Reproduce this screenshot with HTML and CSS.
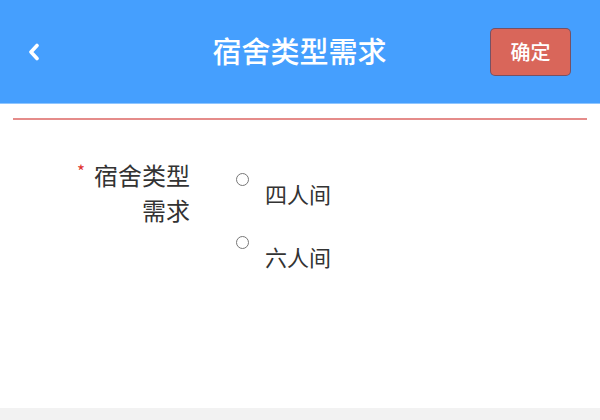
FILE: index.html
```html
<!DOCTYPE html>
<html>
<head>
  <meta charset="UTF-8">
  <meta name="viewport" content="width=device-width, initial-scale=1.0">
  <title>宿舍类型需求</title>
  <link rel="stylesheet" href="styles.css">
</head>
<body>
  <div class="page">
    <div class="topbar">
      <a class="back" href="#" aria-label="返回">
        <svg width="12" height="18" viewBox="0 0 12 18">
          <polyline points="9,2.5 3,9 9,15.5" fill="none" stroke="#fff" stroke-width="3.6" stroke-linecap="round" stroke-linejoin="round"/>
        </svg>
      </a>
      <h1 class="title">宿舍类型需求</h1>
      <button class="ok-btn">确定</button>
    </div>
    <div class="divider"></div>
    <form class="form">
      <div class="form-row">
        <label class="form-label"><span class="req">*</span>宿舍类型需求</label>
        <div class="options">
          <label class="option">
            <input type="radio" name="room" value="4">
            <span>四人间</span>
          </label>
          <label class="option">
            <input type="radio" name="room" value="6">
            <span>六人间</span>
          </label>
        </div>
      </div>
    </form>
  </div>
  <div class="footer"></div>
</body>
</html>
```

FILE: styles.css
```css
body {
  margin: 0;
  background: #f2f2f2;
  font-family: "Noto Sans CJK SC", "Noto Sans", sans-serif;
  color: #333;
}

.page {
  background: #fff;
  min-height: 408px;
}

.topbar {
  display: grid;
  grid-template-columns: 1fr auto 1fr;
  align-items: center;
  height: 103px;
  padding: 0 29px 0 28px;
  background: #459ffe;
  border-bottom: 1px solid #8fc6ff;
}

.back {
  display: flex;
  width: 12px;
  height: 18px;
}

.title {
  margin: 0;
  font-size: 29px;
  font-weight: 500;
  color: #fff;
  line-height: 1;
  padding: 0 0 2px 0;
}

.ok-btn {
  justify-self: end;
  width: 81px;
  height: 48px;
  background: #d9665a;
  border: 1px solid rgba(20, 60, 110, 0.5);
  border-radius: 5px;
  color: #fff;
  font-family: inherit;
  font-size: 20px;
  font-weight: 500;
  padding: 0;
  cursor: pointer;
}

.divider {
  height: 2px;
  background: #e58c8a;
  margin: 14px 13px 0 13px;
}

.form {
  padding: 37px 0 0 66px;
}

.form-row {
  display: flex;
  gap: 46px;
}

.form-label {
  width: 124px;
  text-align: right;
  font-size: 24px;
  line-height: 35px;
  color: #333;
}

.req {
  color: #e0332f;
  font-size: 17px;
  vertical-align: top;
  line-height: 27px;
  margin-right: 9px;
}

.options {
  display: flex;
  flex-direction: column;
  gap: 28px;
  padding-top: 16px;
}

.option {
  display: flex;
  align-items: flex-start;
  gap: 16px;
  font-size: 22px;
  line-height: 30px;
  cursor: pointer;
}

.option input {
  appearance: none;
  -webkit-appearance: none;
  width: 13px;
  height: 13px;
  margin: 0;
  border: 1px solid #777;
  border-radius: 50%;
  background: #fff;
}

.option input:checked {
  background: radial-gradient(circle, #1a73e8 0 3px, #fff 3.5px);
  border-color: #1a73e8;
}

.option span {
  margin-top: 5px;
}

.footer {
  height: 12px;
}
```
